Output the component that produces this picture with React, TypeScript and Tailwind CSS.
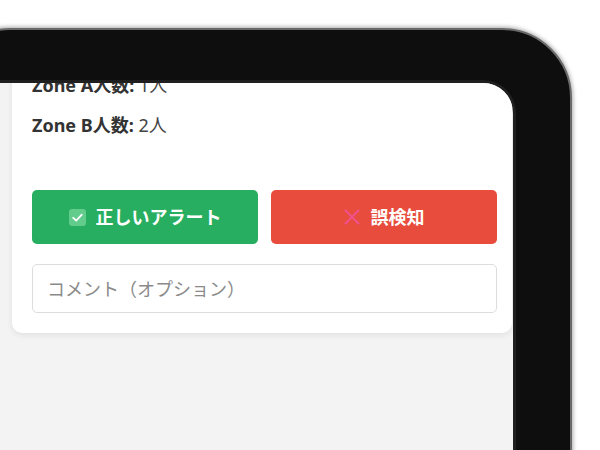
import React, { useState } from 'react';

const CheckBoxIcon = () => (
    <svg width="17" height="17" viewBox="0 0 17 17" className="shrink-0">
        <rect x="0" y="0" width="17" height="17" rx="3" fill="#62cc8c" />
        <path d="M4.2 8.8 L7.2 11.6 L12.8 5.6" fill="none" stroke="#ffffff" strokeWidth="1.8" strokeLinecap="round" strokeLinejoin="round" />
    </svg>
);

const CrossIcon = () => (
    <svg width="16" height="16" viewBox="0 0 16 16" className="shrink-0">
        <path d="M1.5 1.5 L14.5 14.5 M14.5 1.5 L1.5 14.5" stroke="#f0508a" strokeWidth="2.2" strokeLinecap="round" />
    </svg>
);

const App: React.FC = () => {
    const [comment, setComment] = useState('');

    return (
        <div
            className="w-[600px] h-[450px] overflow-hidden bg-white pt-[28px]"
            style={{ fontFamily: '"Noto Sans", "Noto Sans CJK JP", sans-serif' }}
        >
            {/* device frame */}
            <div className="ml-[-60px] w-[632px] h-[520px] rounded-[70px] bg-[#0e0e0e] border-2 border-[#6a6a6a] shadow-[0_0_4px_1px_rgba(0,0,0,0.35)] pl-[50px] pr-[57px] pt-[53px]">
                {/* screen */}
                <div className="h-full rounded-tr-[30px] bg-[#f3f3f3] overflow-hidden shadow-[0_0_0_3px_#1f1f1f] pl-5">
                    <div className="mt-[-30px] w-[500px] rounded-[10px] bg-white shadow-[0_2px_6px_rgba(0,0,0,0.08)] pl-5 pr-[15px] pt-5 pb-5">
                        <p className="text-[18px] leading-6 text-[#444]">
                            <span className="font-bold text-[#333]">Zone A人数:</span> 1人
                        </p>
                        <p className="mt-4 text-[18px] leading-6 text-[#444]">
                            <span className="font-bold text-[#333]">Zone B人数:</span> 2人
                        </p>

                        <div className="mt-[53px] flex gap-[13px]">
                            <button className="flex-1 h-[54px] rounded-[5px] bg-[#27ae60] text-white font-bold text-[18px] flex items-center justify-center gap-[10px]">
                                <CheckBoxIcon />
                                正しいアラート
                            </button>
                            <button className="flex-1 h-[54px] rounded-[5px] bg-[#e74c3c] text-white font-bold text-[18px] flex items-center justify-center gap-[11px]">
                                <CrossIcon />
                                誤検知
                            </button>
                        </div>

                        <input
                            value={comment}
                            onChange={e => setComment(e.target.value)}
                            placeholder="コメント（オプション）"
                            className="mt-5 block w-full h-[49px] rounded-[5px] border border-[#dddddd] px-[14px] text-[18px] text-[#333] placeholder:text-[#8a8a8a] outline-none"
                        />
                    </div>
                </div>
            </div>
        </div>
    );
};

export default App;
